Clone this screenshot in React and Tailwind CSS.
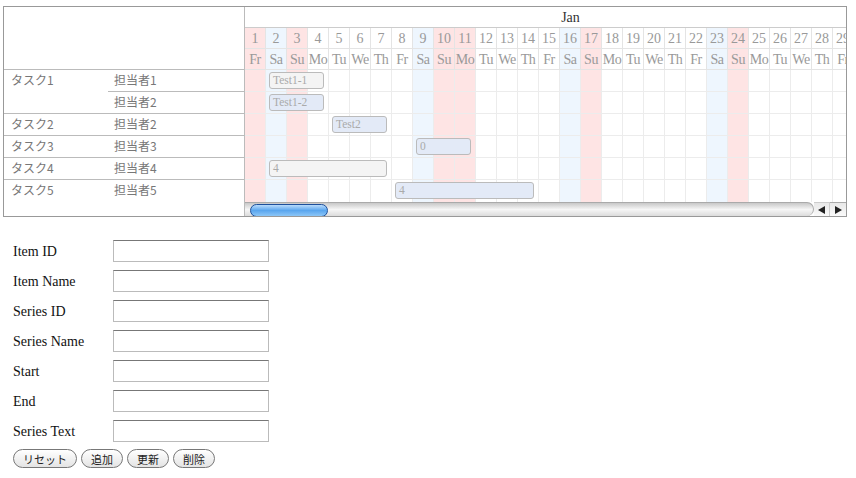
import React from "react";

const WD = ["Fr", "Sa", "Su", "Mo", "Tu", "We", "Th"];
const HOLIDAYS = [1, 11];

const DAYS = Array.from({ length: 31 }, (_, i) => {
  const d = i + 1;
  const wd = WD[i % 7];
  let bg = "";
  if (wd === "Sa") bg = "bg-[#eef6fe]";
  if (wd === "Su" || HOLIDAYS.includes(d)) bg = "bg-[#fee4e4]";
  return { d, wd, bg };
});

const ROWS = [
  { task: "タスク1", person: "担当者1", bar: { from: 2, to: 4, text: "Test1-1", tone: "gray" } },
  { task: "", person: "担当者2", bar: { from: 2, to: 4, text: "Test1-2", tone: "blue" } },
  { task: "タスク2", person: "担当者2", bar: { from: 5, to: 7, text: "Test2", tone: "blue" } },
  { task: "タスク3", person: "担当者3", bar: { from: 9, to: 11, text: "0", tone: "blue" } },
  { task: "タスク4", person: "担当者4", bar: { from: 2, to: 7, text: "4", tone: "gray" } },
  { task: "タスク5", person: "担当者5", bar: { from: 8, to: 14, text: "4", tone: "blue" } },
];

const COL = 21;
const serif = "font-['Liberation_Serif','DejaVu_Serif',serif]";
const jp = "font-['Noto_Sans_CJK_JP',sans-serif]";

function LeftPane() {
  return (
    <div className={`w-[241px] shrink-0 border-r border-[#bbb] flex flex-col ${jp} text-[12px] text-[#777]`}>
      <div className="h-[63px] border-b border-[#bbb]" />
      {/* task 1 spans two rows */}
      <div className="flex h-[44px] border-b border-[#bbb]">
        <div className="w-[104px] pl-[7px] pt-[1px]">タスク1</div>
        <div className="flex-1 flex flex-col">
          <div className="h-[22px] border-b border-[#bbb] pl-[6px] pt-[1px]">担当者1</div>
          <div className="h-[22px] pl-[6px] pt-[1px]">担当者2</div>
        </div>
      </div>
      {ROWS.slice(2).map((r, i) => (
        <div key={r.task} className={`flex h-[22px] ${i < 3 ? "border-b border-[#bbb]" : ""}`}>
          <div className="w-[104px] pl-[7px] pt-[1px]">{r.task}</div>
          <div className="flex-1 pl-[6px] pt-[1px]">{r.person}</div>
        </div>
      ))}
      <div className="flex-1" />
    </div>
  );
}

function Bar({ bar }) {
  const left = (bar.from - 1) * COL + 3;
  const width = (bar.to - bar.from + 1) * COL - 8;
  return (
    <div
      className={`absolute top-[2px] h-[17px] rounded-[3px] border border-[#bbb] pl-[3px] text-[11.5px] leading-[15px] text-[#aaa] ${serif} ${
        bar.tone === "blue" ? "bg-[#e3eaf7]" : "bg-[#f4f4f4]"
      }`}
      style={{ left, width }}
    >
      {bar.text}
    </div>
  );
}

function Arrow({ dir }) {
  return (
    <svg width="7" height="8" viewBox="0 0 7 8">
      {dir === "left" ? <polygon points="7,0 7,8 0,4" fill="#222" /> : <polygon points="0,0 0,8 7,4" fill="#222" />}
    </svg>
  );
}

function Chart() {
  return (
    <div className="flex-1 min-w-0 flex flex-col overflow-hidden">
      <div className="flex-1 overflow-hidden">
        <div className="w-[651px] flex flex-col">
          {/* month */}
          <div className={`h-[21px] border-b border-[#ccc] flex items-center justify-center text-[14px] text-[#333] ${serif}`}>
            Jan
          </div>
          {/* day numbers */}
          <div className="flex h-[21px] border-b border-[#e4e4e4]">
            {DAYS.map((x) => (
              <div key={x.d} className={`w-[21px] shrink-0 border-r border-[#e4e4e4] flex items-center justify-center text-[14px] text-[#999] ${serif} ${x.bg}`}>
                {x.d}
              </div>
            ))}
          </div>
          {/* weekdays */}
          <div className="flex h-[21px] border-b border-[#e4e4e4]">
            {DAYS.map((x) => (
              <div key={x.d} className={`w-[21px] shrink-0 border-r border-[#e4e4e4] flex items-center justify-center overflow-hidden whitespace-nowrap text-[14px] tracking-[-0.5px] text-[#999] ${serif} ${x.bg}`}>
                {x.wd}
              </div>
            ))}
          </div>
          {/* rows */}
          {ROWS.map((r, i) => (
            <div key={i} className={`relative flex h-[22px] ${i < 5 ? "border-b border-[#ececec]" : ""}`}>
              {DAYS.map((x) => (
                <div key={x.d} className={`w-[21px] shrink-0 border-r border-[#ececec] ${x.bg}`} />
              ))}
              <Bar bar={r.bar} />
            </div>
          ))}
        </div>
      </div>
      {/* scrollbar */}
      <div className="h-[14px] flex shrink-0">
        <div className="flex-1 relative rounded-r-full border-r border-[#999] bg-gradient-to-b from-[#c8c8c8] via-[#f6f6f6] to-[#dcdcdc] border-t border-[#aaa]">
          <div className="absolute left-[5px] top-[1px] w-[78px] h-[13px] rounded-full border border-[#1d4f9c] bg-gradient-to-b from-[#b8dbfb] via-[#5aa6ee] to-[#8cc6f7]" />
        </div>
        <div className="w-[16px] border-t border-[#aaa] border-r border-[#ccc] bg-gradient-to-b from-[#e8e8e8] to-[#fafafa] flex items-center justify-center">
          <Arrow dir="left" />
        </div>
        <div className="w-[16px] border-t border-[#aaa] bg-gradient-to-b from-[#e8e8e8] to-[#fafafa] flex items-center justify-center">
          <Arrow dir="right" />
        </div>
      </div>
    </div>
  );
}

const FIELDS = ["Item ID", "Item Name", "Series ID", "Series Name", "Start", "End", "Series Text"];

export default function App() {
  return (
    <div className="w-[856px] h-[478px] bg-white pt-[6px] pl-[3px]">
      <div className="w-[844px] h-[211px] border border-[#999] flex">
        <LeftPane />
        <Chart />
      </div>

      <div className="mt-[19px] pl-[10px] flex flex-col">
        {FIELDS.map((f) => (
          <div key={f} className="flex items-center h-[30px]">
            <label className={`w-[100px] text-[14px] text-[#111] ${serif}`}>{f}</label>
            <input className="w-[156px] h-[22px] border border-[#bbb] border-t-[#777] bg-white outline-none" />
          </div>
        ))}
        <div className={`flex gap-[4px] mt-[3px] ${jp}`}>
          {["リセット", "追加", "更新", "削除"].map((b) => (
            <button
              key={b}
              className="h-[19px] px-[9px] rounded-full border border-[#777] bg-gradient-to-b from-white to-[#e4e4e4] text-[11px] leading-[16px] text-[#222]"
            >
              {b}
            </button>
          ))}
        </div>
      </div>
    </div>
  );
}
